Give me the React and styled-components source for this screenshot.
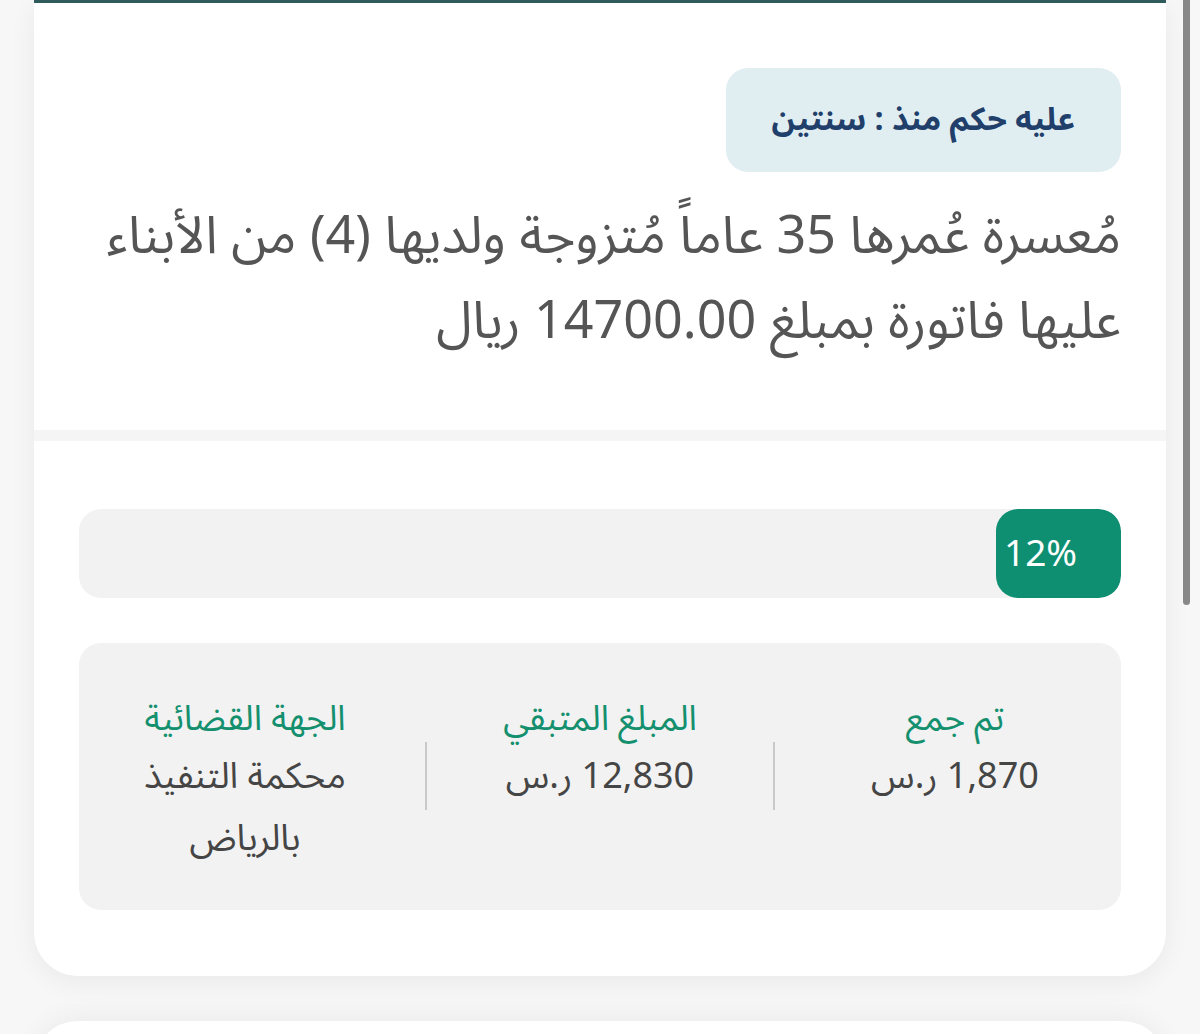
import styled, { createGlobalStyle } from "styled-components";

const GlobalStyle = createGlobalStyle`
  html, body {
    margin: 0;
    padding: 0;
    background: #f7f7f7;
  }
  body {
    font-family: "Noto Sans Arabic", "Noto Sans", "DejaVu Sans", sans-serif;
    overflow: hidden;
  }
`;

const Page = styled.div`
  direction: rtl;
  width: 1200px;
  height: 1034px;
  position: relative;
  overflow: hidden;
  background: #f7f7f7;
  display: flex;
  flex-direction: column;
  align-items: center;
  gap: 45px;
`;

const Card = styled.div`
  width: 1132px;
  background: #f5f5f5;
  border-top: 3px solid #2f5b5c;
  border-radius: 0 0 44px 44px;
  box-shadow: 0 6px 28px rgba(0, 0, 0, 0.06);
  overflow: hidden;
  display: flex;
  flex-direction: column;
  gap: 11px;
  flex-shrink: 0;
`;

const NextCard = styled.div`
  width: 1132px;
  height: 80px;
  background: #fff;
  border-radius: 44px 44px 0 0;
  box-shadow: 0 -4px 28px rgba(0, 0, 0, 0.05);
  flex-shrink: 0;
`;

const Section = styled.div`
  background: #fff;
  padding: ${({ $top }) => $top}px 45px ${({ $bottom }) => $bottom}px;
  display: flex;
  flex-direction: column;
  align-items: stretch;
  gap: ${({ $gap }) => $gap || 0}px;
`;

const Badge = styled.div`
  align-self: flex-start;
  background: #e1eef1;
  color: #213f6b;
  font-weight: 700;
  font-size: 32px;
  line-height: 48px;
  padding: 28px 46px 28px;
  border-radius: 22px;
`;

const Description = styled.p`
  margin: 22px 0 0;
  color: #555;
  font-size: 52px;
  line-height: 85px;
`;

const Track = styled.div`
  height: 89px;
  background: #f2f2f2;
  border-radius: 22px;
  display: flex;
  overflow: hidden;
`;

const Fill = styled.div`
  background: #0e8f72;
  color: #fff;
  border-radius: 22px;
  font-size: 37px;
  display: flex;
  align-items: center;
  justify-content: flex-end;
  padding-left: 8px;
  box-sizing: border-box;
`;

const Stats = styled.div`
  background: #f2f2f2;
  border-radius: 22px;
  padding: 49px 0 40px;
  display: grid;
  grid-template-columns: 1fr 2px 1fr 2px 1fr;
  align-items: start;
`;

const Stat = styled.div`
  text-align: center;
  display: flex;
  flex-direction: column;
  align-items: center;
  padding: ${({ $edge }) => ($edge === "start" ? "0 0 0 14px" : $edge === "end" ? "0 14px 0 0" : "0")};
`;

const Label = styled.div`
  color: #14906f;
  font-size: 35px;
  line-height: 54px;
`;

const Value = styled.div`
  color: #454545;
  font-size: 36px;
  line-height: 62px;
  max-width: 220px;
`;

const Divider = styled.div`
  width: 2px;
  height: 68px;
  margin-top: 50px;
  background: #c9c9c9;
`;

const Scrollbar = styled.div`
  position: absolute;
  top: 0;
  right: 10px;
  width: 7px;
  height: 605px;
  background: #888;
  border-radius: 0 0 4px 4px;
`;

const stats = [
  { label: "تم جمع", value: "1,870 ر.س", edge: "start" },
  { label: "المبلغ المتبقي", value: "12,830 ر.س" },
  { label: "الجهة القضائية", value: "محكمة التنفيذ بالرياض", edge: "end" },
];

export default function App() {
  const percent = 12;
  return (
    <>
      <GlobalStyle />
      <Page>
        <Card>
          <Section $top={65} $bottom={66}>
            <Badge>عليه حكم منذ : سنتين</Badge>
            <Description>
              مُعسرة عُمرها 35 عاماً مُتزوجة ولديها (4) من الأبناء عليها فاتورة
              بمبلغ 14700.00 ريال
            </Description>
          </Section>
          <Section $top={68} $bottom={66} $gap={45}>
            <Track>
              <Fill style={{ width: `${percent}%` }}>{percent}%</Fill>
            </Track>
            <Stats>
              {stats.map((s, i) => [
                i > 0 && <Divider key={"d" + i} />,
                <Stat key={s.label} $edge={s.edge}>
                  <Label>{s.label}</Label>
                  <Value>{s.value}</Value>
                </Stat>,
              ])}
            </Stats>
          </Section>
        </Card>
        <NextCard />
        <Scrollbar />
      </Page>
    </>
  );
}
